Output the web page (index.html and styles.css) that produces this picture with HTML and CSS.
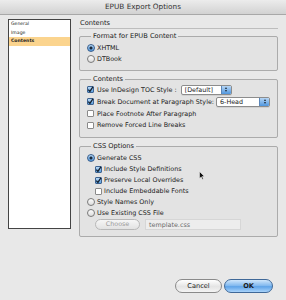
FILE: index.html
```html
<!DOCTYPE html>
<html lang="en">
<head>
    <meta charset="UTF-8">
    <title>EPUB Export Options</title>
    <link rel="stylesheet" href="styles.css">
</head>
<body>
    <div class="window">
        <div class="titlebar">EPUB Export Options</div>

        <div class="content">
            <div class="sidebar">
                <div class="item">General</div>
                <div class="item">Image</div>
                <div class="item active">Contents</div>
            </div>

            <div class="main">
                <div class="heading">Contents</div>

                <fieldset class="group g1">
                    <legend>Format for EPUB Content</legend>
                    <div class="row"><span class="radio on"></span>XHTML</div>
                    <div class="row"><span class="radio"></span>DTBook</div>
                </fieldset>

                <fieldset class="group g2">
                    <legend>Contents</legend>
                    <div class="row tall">
                        <span class="check on"><svg viewBox="0 0 7 7"><path d="M1.3 3.6 L2.9 5.4 L5.9 0.8" /></svg></span>Use InDesign TOC Style :
                        <span class="select s1"><span class="val">[Default]</span><span class="stepper"><i class="up"></i><i class="down"></i></span></span>
                    </div>
                    <div class="row tall">
                        <span class="check on"><svg viewBox="0 0 7 7"><path d="M1.3 3.6 L2.9 5.4 L5.9 0.8" /></svg></span>Break Document at Paragraph Style:
                        <span class="select s2"><span class="val">6-Head</span><span class="stepper"><i class="up"></i><i class="down"></i></span></span>
                    </div>
                    <div class="row tall"><span class="check"></span>Place Footnote After Paragraph</div>
                    <div class="row"><span class="check"></span>Remove Forced Line Breaks</div>
                </fieldset>

                <fieldset class="group g3">
                    <legend>CSS Options</legend>
                    <div class="row"><span class="radio on"></span>Generate CSS</div>
                    <div class="row sub"><span class="check on"><svg viewBox="0 0 7 7"><path d="M1.3 3.6 L2.9 5.4 L5.9 0.8" /></svg></span>Include Style Definitions</div>
                    <div class="row sub"><span class="check on"><svg viewBox="0 0 7 7"><path d="M1.3 3.6 L2.9 5.4 L5.9 0.8" /></svg></span>Preserve Local Overrides</div>
                    <div class="row sub"><span class="check"></span>Include Embeddable Fonts</div>
                    <div class="row"><span class="radio"></span>Style Names Only</div>
                    <div class="row"><span class="radio"></span>Use Existing CSS File</div>
                    <div class="row sub choose-row">
                        <span class="choose">Choose</span>
                        <span class="field">template.css</span>
                    </div>
                </fieldset>

                <div class="buttons">
                    <span class="btn cancel">Cancel</span>
                    <span class="btn ok">OK</span>
                </div>
            </div>
        </div>

        <svg class="cursor" viewBox="0 0 6 9" width="6" height="9">
            <path d="M0.5 0.5 L0.5 7.5 L2.2 5.9 L3.4 8.5 L4.4 8 L3.3 5.5 L5.5 5.5 Z" fill="#111" stroke="#fff" stroke-width="0.5" />
        </svg>
    </div>
</body>
</html>
```

FILE: styles.css
```css
body { margin: 0; padding: 0; background: #e8e8e8; }
.window {
    position: relative;
    width: 286px;
    height: 300px;
    background: #e8e8e8;
    font-family: "DejaVu Sans", sans-serif;
    font-size: 6.4px;
    color: #1a1a1a;
    overflow: hidden;
}
.titlebar {
    height: 14px;
    line-height: 14px;
    text-align: center;
    font-size: 7.3px;
    color: #333;
    background: linear-gradient(#ececec, #d2d2d2);
    border-bottom: 1px solid #a8a8a8;
}
.content { display: flex; padding: 4px 8px 0 8px; }

/* left list */
.sidebar {
    box-sizing: border-box;
    width: 63px;
    height: 210px;
    margin-right: 8px;
    background: #fff;
    border: 1px solid #444;
}
.item { height: 8.5px; line-height: 8.5px; padding-left: 2px; font-size: 4.6px; color: #222; }
.item.active { background: #fbd48e; font-weight: bold; }

/* right side */
.main { width: 199px; }
.heading {
    height: 9px;
    line-height: 9px;
    padding-left: 1px;
    font-size: 6.7px;
    border-bottom: 1px solid #bdbdbd;
    margin-bottom: 3px;
}
.group {
    margin: 0;
    padding: 0 4px 5px 7px;
    border: 1px solid #ababab;
    border-radius: 2px;
    background: #e3e3e3;
}
.group legend { font-size: 6.7px; line-height: 9px; padding: 0 2px; margin-left: 4px; }
.g1 { padding-top: 1.5px; }
.g2 { margin-top: 4px; padding-bottom: 6px; }
.g3 { margin-top: 4px; padding-top: 2px; }

.row { display: flex; align-items: center; height: 11px; white-space: nowrap; }
.row.tall { height: 12px; }
.row.sub { padding-left: 8px; }

.radio {
    box-sizing: border-box;
    width: 8px;
    height: 8px;
    margin-right: 2px;
    border-radius: 50%;
    border: 1px solid #7a7a7a;
    background: linear-gradient(#fdfdfd, #dcdcdc);
}
.radio.on {
    border-color: #3a5f8c;
    background: radial-gradient(circle, #1c2a3a 0 1.4px, transparent 1.7px), linear-gradient(#b8d8f6, #4e95dc);
}
.check {
    box-sizing: border-box;
    display: flex;
    width: 7px;
    height: 7px;
    margin-right: 3px;
    border: 1px solid #8a8a8a;
    border-radius: 1px;
    background: #fff;
}
.row.sub .check { margin-right: 2px; }
.check.on { border-color: #3d6391; background: linear-gradient(#bcdaf6, #5a9fe0); }
.check svg { width: 7px; height: 7px; margin: -1px; overflow: visible; }
.check svg path { fill: none; stroke: #14202e; stroke-width: 1.3; }

.select {
    box-sizing: border-box;
    display: flex;
    align-items: stretch;
    height: 10px;
    border: 1px solid #8c8c8c;
    border-radius: 2px;
    background: #fff;
    box-shadow: 0 1px 0 rgba(0,0,0,0.08);
}
.select .val { flex: 1; padding-left: 3px; line-height: 8px; }
.select .stepper {
    display: flex;
    flex-direction: column;
    justify-content: center;
    align-items: center;
    gap: 1px;
    width: 9px;
    border-left: 1px solid #5b86b8;
    border-radius: 0 1px 1px 0;
    background: linear-gradient(#b6d6f6, #4f96de);
}
.stepper i { width: 0; height: 0; border-left: 1.5px solid transparent; border-right: 1.5px solid transparent; }
.stepper .up { border-bottom: 2px solid #1b2836; }
.stepper .down { border-top: 2px solid #1b2836; }
.s1 { width: 51px; margin-left: 4px; }
.s2 { width: 54px; margin-left: 2px; }

.choose-row { height: 12px; }
.choose {
    box-sizing: border-box;
    width: 45px;
    height: 11px;
    line-height: 9px;
    text-align: center;
    border: 1px solid #b8b8b8;
    border-radius: 6px;
    background: linear-gradient(#f6f6f6, #e2e2e2);
    color: #9a9a9a;
    margin-right: 5px;
}
.field {
    box-sizing: border-box;
    width: 96px;
    height: 11px;
    line-height: 10px;
    padding-left: 3px;
    background: #ededed;
    border: 1px solid #d6d6d6;
    color: #6a6a6a;
}

.buttons { display: flex; justify-content: flex-end; gap: 2px; margin-top: 42px; padding-right: 5px; }
.btn {
    box-sizing: border-box;
    height: 14px;
    line-height: 12px;
    text-align: center;
    border-radius: 7px;
    font-size: 6.6px;
}
.cancel { width: 47px; border: 1px solid #8a8a8a; background: linear-gradient(#ffffff, #e4e4e4 55%, #f4f4f4); }
.ok { width: 49px; border: 1px solid #3f6898; background: linear-gradient(#cfe6fb, #7db6ee 50%, #5ea3e8 55%, #a9d3fa); font-weight: bold; }

.cursor { position: absolute; left: 199px; top: 171px; }
```
